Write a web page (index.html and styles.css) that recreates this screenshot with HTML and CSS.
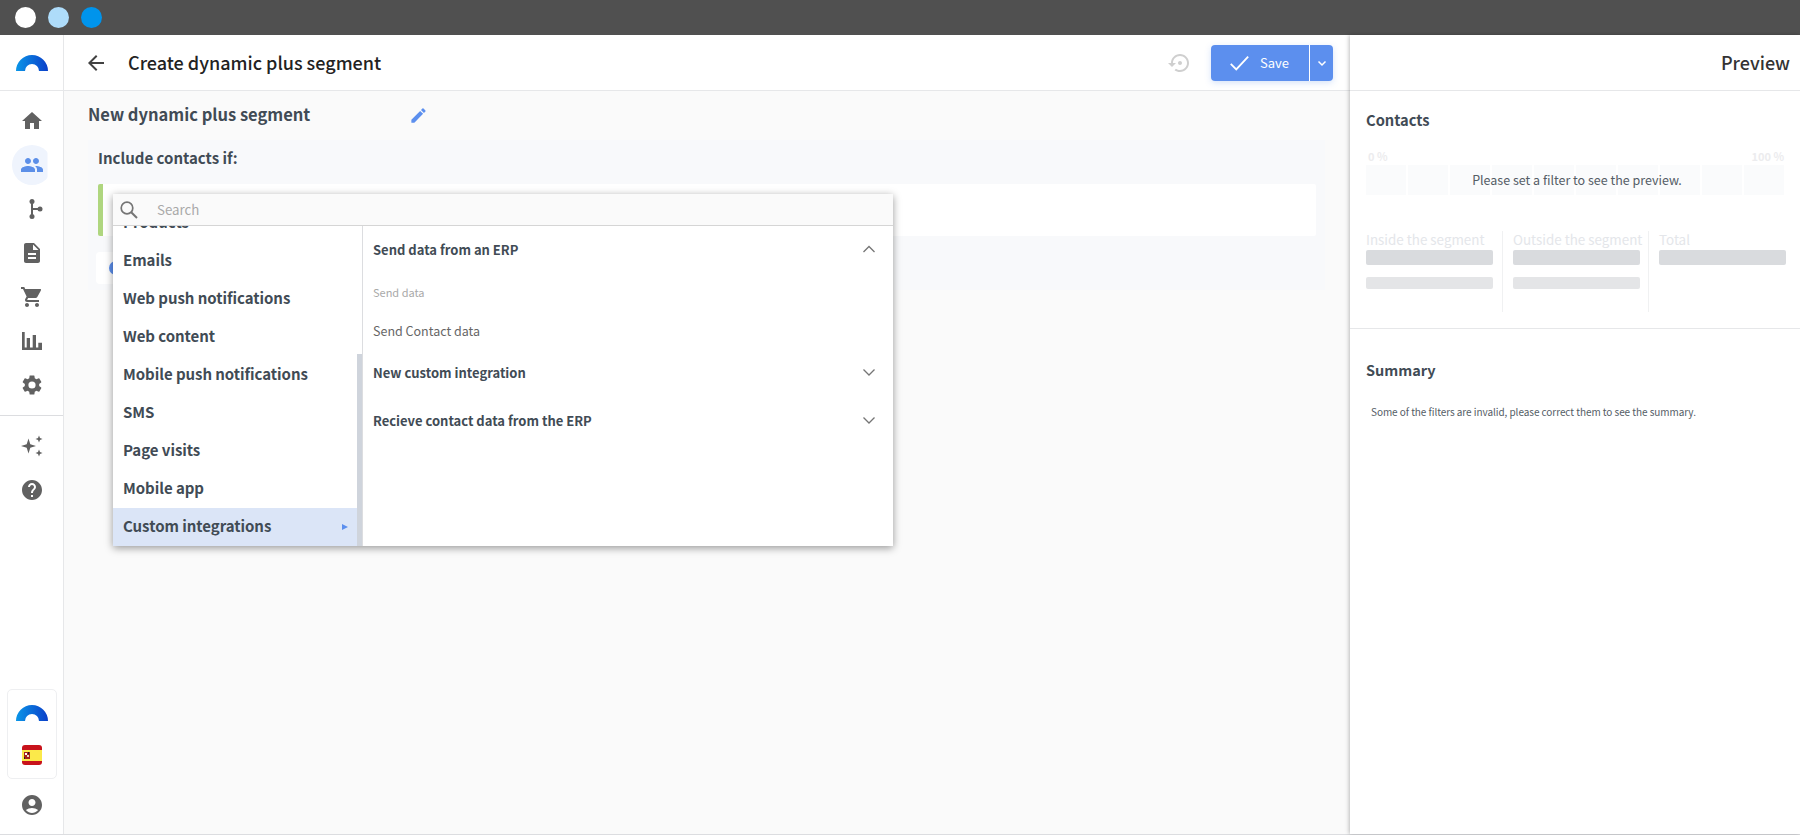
FILE: index.html
```html
<!DOCTYPE html>
<html lang="en">
<head>
<meta charset="utf-8">
<title>Create dynamic plus segment</title>
<link rel="stylesheet" href="styles.css">
</head>
<body>
<div class="titlebar">
  <span class="dot dot-white"></span><span class="dot dot-light"></span><span class="dot dot-blue"></span>
</div>
<div class="app">
  <nav class="sidebar">
    <div class="side-logo">
      <svg class="arch" viewBox="0 0 32 16"><defs><linearGradient id="g1" x1="0" x2="1" y1="0" y2="0"><stop offset="0" stop-color="#0a96e8"/><stop offset="1" stop-color="#0b3fc9"/></linearGradient></defs><path d="M0 16A16 16 0 0 1 32 16H23A7 7 0 0 0 9 16Z" fill="url(#g1)"/></svg>
    </div>
    <div class="side-icons">
      <a class="side-icon"><svg viewBox="0 0 24 24"><path d="M10 20v-6h4v6h5v-8h3L12 3 2 12h3v8z"/></svg></a>
      <a class="side-icon active"><svg viewBox="0 0 24 24"><path d="M16 11c1.660 0 2.990-1.340 2.990-3S17.660 5 16 5s-3 1.340-3 3 1.340 3 3 3zm-8 0c1.660 0 2.990-1.340 2.990-3S9.660 5 8 5 5 6.340 5 8s1.340 3 3 3zm0 2c-2.330 0-7 1.170-7 3.500V19h14v-2.500C15 14.170 10.330 13 8 13zm8 0c-.29 0-.62.02-.97.05 1.160.84 1.970 1.970 1.970 3.450V19h6v-2.500c0-2.330-4.670-3.500-7-3.500z"/></svg></a>
      <a class="side-icon"><svg viewBox="0 0 24 24"><circle cx="12" cy="4.500" r="2.500"/><circle cx="12" cy="19.500" r="2.500"/><circle cx="20" cy="12" r="2.500"/><path d="M11 4.500h2V11h7v2h-7v6.500h-2z"/></svg></a>
      <a class="side-icon"><svg viewBox="0 0 24 24"><path d="M14 2H6c-1.100 0-2 .9-2 2v16c0 1.100.89 2 1.990 2H18c1.100 0 2-.9 2-2V8l-6-6zm2 16H8v-2h8v2zm0-4H8v-2h8v2zm-3-5V3.500L18.500 9H13z"/></svg></a>
      <a class="side-icon"><svg viewBox="0 0 24 24"><path d="M7 18c-1.100 0-1.990.9-1.990 2S5.900 22 7 22s2-.9 2-2-.9-2-2-2zM1 2v2h2l3.600 7.590-1.350 2.450c-.16.28-.25.61-.25.960 0 1.100.9 2 2 2h12v-2H7.420c-.14 0-.25-.11-.25-.25l.03-.12.9-1.630h7.450c.75 0 1.410-.41 1.750-1.030l3.580-6.490A1 1 0 0 0 20 4H5.210l-.94-2H1zm16 16c-1.100 0-1.990.9-1.990 2s.89 2 1.990 2 2-.9 2-2-.9-2-2-2z"/></svg></a>
      <a class="side-icon"><svg viewBox="0 0 24 24"><path d="M2 3h2.700v15.500h2V9H10v9.500h2.700V6H16v12.500h2.300v-4.800H22V21H2z"/></svg></a>
      <a class="side-icon"><svg viewBox="0 0 24 24"><path d="M19.140 12.940c.04-.3.060-.61.060-.94 0-.32-.02-.64-.07-.94l2.030-1.580a.49.49 0 0 0 .12-.61l-1.920-3.320a.488.488 0 0 0-.59-.22l-2.390.96c-.5-.38-1.030-.7-1.620-.94l-.36-2.540a.484.484 0 0 0-.48-.41h-3.840c-.24 0-.43.17-.47.41l-.36 2.540c-.59.24-1.130.57-1.620.94l-2.390-.96c-.22-.08-.47 0-.59.22L2.740 8.870c-.12.21-.08.47.12.61l2.030 1.580c-.05.3-.09.63-.09.94s.02.64.07.94l-2.030 1.580a.49.49 0 0 0-.12.61l1.920 3.320c.12.22.37.29.59.22l2.390-.96c.5.38 1.030.7 1.620.94l.36 2.540c.05.24.24.41.48.41h3.840c.24 0 .44-.17.47-.41l.36-2.540c.59-.24 1.130-.56 1.620-.94l2.390.96c.22.08.47 0 .59-.22l1.920-3.320c.12-.22.07-.47-.12-.61l-2.010-1.580zM12 15.600A3.600 3.600 0 1 1 12 8.400a3.600 3.600 0 0 1 0 7.200z"/></svg></a>
    </div>
    <div class="side-rule"></div>
    <div class="side-icons">
      <a class="side-icon"><svg viewBox="0 0 24 24"><path d="M8.500 4.500L10.300 10.200 16 12 10.300 13.800 8.500 19.500 6.700 13.800 1 12 6.700 10.200zM19 1.500L20 4 22.500 5 20 6 19 8.500 18 6 15.500 5 18 4zM19 15.500L20 18 22.500 19 20 20 19 22.500 18 20 15.500 19 18 18z"/></svg></a>
      <a class="side-icon"><svg viewBox="0 0 24 24"><path d="M12 2C6.480 2 2 6.480 2 12s4.480 10 10 10 10-4.480 10-10S17.520 2 12 2zm1 17h-2v-2h2v2zm2.070-7.750l-.9.920C13.450 12.900 13 13.500 13 15h-2v-.5c0-1.100.45-2.100 1.170-2.830l1.240-1.260c.37-.36.59-.86.59-1.410 0-1.100-.9-2-2-2s-2 .9-2 2H8c0-2.210 1.790-4 4-4s4 1.790 4 4c0 .88-.36 1.680-.93 2.250z"/></svg></a>
    </div>
    <div class="side-spacer"></div>
    <div class="side-card">
      <svg class="arch" viewBox="0 0 32 16"><defs><linearGradient id="g2" x1="0" x2="1" y1="0" y2="0"><stop offset="0" stop-color="#0a96e8"/><stop offset="1" stop-color="#0b3fc9"/></linearGradient></defs><path d="M0 16A16 16 0 0 1 32 16H23A7 7 0 0 0 9 16Z" fill="url(#g2)"/></svg>
      <svg class="flag" viewBox="0 0 20 20"><rect width="20" height="20" rx="3" fill="#c8131b"/><rect y="5" width="20" height="11" fill="#fbe94a"/><rect x="2" y="7" width="6" height="7" fill="#a5201c"/><rect x="3" y="8" width="2" height="2" fill="#fff"/><rect x="5" y="10" width="2" height="2" fill="#e8d9c0"/><rect x="2" y="12" width="1" height="2" fill="#222"/><rect x="6" y="7" width="1" height="2" fill="#222"/></svg>
    </div>
    <a class="side-icon side-user"><svg viewBox="0 0 24 24"><path d="M12 2C6.480 2 2 6.480 2 12s4.480 10 10 10 10-4.480 10-10S17.520 2 12 2zm0 4c1.930 0 3.500 1.570 3.500 3.500S13.930 13 12 13s-3.500-1.570-3.500-3.500S10.070 6 12 6zm0 14c-2.030 0-4.430-.82-6.140-2.880a9.950 9.950 0 0 1 12.280 0C16.430 19.180 14.030 20 12 20z"/></svg></a>
  </nav>

  <main class="main">
    <header class="topbar">
      <svg class="back" viewBox="0 0 24 24"><path d="M20 11H7.830l5.590-5.590L12 4l-8 8 8 8 1.410-1.410L7.830 13H20z"/></svg>
      <h1 class="page-title">Create dynamic plus segment</h1>
      <svg class="restore" viewBox="0 0 24 24"><path d="M14 12c0-1.100-.9-2-2-2s-2 .9-2 2 .9 2 2 2 2-.9 2-2zm-2-9c-4.970 0-9 4.030-9 9H0l4 4 4-4H5c0-3.870 3.130-7 7-7s7 3.130 7 7-3.130 7-7 7c-1.510 0-2.910-.49-4.060-1.300l-1.420 1.440C8.040 20.300 9.940 21 12 21c4.970 0 9-4.030 9-9s-4.030-9-9-9z"/></svg>
      <div class="save">
        <button class="save-main"><svg viewBox="0 0 24 24"><path d="M3 13l6 6L22 5" fill="none" stroke="#fff" stroke-width="2"/></svg><span>Save</span></button>
        <button class="save-more"><svg viewBox="0 0 12 12"><path d="M2.500 4.500L6 8l3.500-3.500" fill="none" stroke="#fff" stroke-width="1.500"/></svg></button>
      </div>
    </header>
    <div class="content">
      <div class="name-row">
        <h2 class="seg-name">New dynamic plus segment</h2>
        <svg class="pencil" viewBox="0 0 24 24"><path d="M3 17.250V21h3.750L17.810 9.940l-3.750-3.750L3 17.250zM20.710 7.040a1 1 0 0 0 0-1.410l-2.340-2.340a1 1 0 0 0-1.410 0l-1.830 1.830 3.750 3.750 1.830-1.830z"/></svg>
      </div>
      <section class="include">
        <div class="include-title">Include contacts if:</div>
        <div class="rule-row"></div>
        <div class="add-row"><span class="add-dot"></span></div>
      </section>
    </div>

    <div class="picker">
      <div class="picker-search">
        <svg viewBox="0 0 18 18"><circle cx="7" cy="7" r="5.800" fill="none" stroke="#757575" stroke-width="1.700"/><path d="M11.200 11.200L17 17" stroke="#757575" stroke-width="2"/></svg>
        <span>Search</span>
      </div>
      <div class="picker-body">
        <div class="cats">
          <div class="cat-list">
            <div class="cat">Products</div>
            <div class="cat">Emails</div>
            <div class="cat">Web push notifications</div>
            <div class="cat">Web content</div>
            <div class="cat">Mobile push notifications</div>
            <div class="cat">SMS</div>
            <div class="cat">Page visits</div>
            <div class="cat">Mobile app</div>
            <div class="cat selected">Custom integrations<i class="cat-arrow"></i></div>
          </div>
          <div class="scroll-track"><div class="scroll-thumb"></div></div>
        </div>
        <div class="detail">
          <div class="group-head first">Send data from an ERP<svg viewBox="0 0 16 16"><path d="M2.500 11L8 5.500l5.500 5.500" fill="none" stroke="#757575" stroke-width="1.300"/></svg></div>
          <div class="group-label">Send data</div>
          <div class="group-item">Send Contact data</div>
          <div class="group-head">New custom integration<svg viewBox="0 0 16 16"><path d="M2.500 5.500L8 11l5.500-5.500" fill="none" stroke="#757575" stroke-width="1.300"/></svg></div>
          <div class="group-head">Recieve contact data from the ERP<svg viewBox="0 0 16 16"><path d="M2.500 5.500L8 11l5.500-5.500" fill="none" stroke="#757575" stroke-width="1.300"/></svg></div>
        </div>
      </div>
    </div>
  </main>

  <aside class="preview">
    <div class="preview-head">Preview</div>
    <section class="contacts">
      <h3 class="panel-title">Contacts</h3>
      <div class="scale"><span>0 %</span><span>100 %</span></div>
      <div class="cells">
        <i></i><i></i><i></i><i></i><i></i><i></i><i></i><i></i><i></i><i></i>
        <div class="cells-msg">Please set a filter to see the preview.</div>
      </div>
      <div class="stats">
        <div class="stat"><div class="stat-label">Inside the segment</div><div class="bar bar-a"></div><div class="bar bar-b"></div></div>
        <div class="stat"><div class="stat-label">Outside the segment</div><div class="bar bar-a"></div><div class="bar bar-b"></div></div>
        <div class="stat"><div class="stat-label">Total</div><div class="bar bar-a"></div></div>
      </div>
    </section>
    <section class="summary">
      <h3 class="panel-title summary-title">Summary</h3>
      <p class="summary-text">Some of the filters are invalid, please correct them to see the summary.</p>
    </section>
  </aside>
</div>
</body>
</html>
```
FILE: styles.css
```css
* { box-sizing: border-box; }
html, body { margin: 0; height: 100%; overflow: hidden; }
body { display: flex; flex-direction: column; font-family: "Noto Sans CJK JP", "Noto Sans", sans-serif; color: #414b55; background: #fff; }
h1, h2, h3, p { margin: 0; }
svg { display: block; }

.titlebar { height: 35px; flex: none; background: #505050; display: flex; align-items: center; gap: 12px; padding-left: 15px; }
.dot { width: 21px; height: 21px; border-radius: 50%; }
.dot-white { background: #fff; }
.dot-light { background: #aedcfa; }
.dot-blue { background: #0094ec; }

.app { flex: 1; display: flex; min-height: 0; border-bottom: 1px solid #dcdde0; }

.sidebar { width: 64px; flex: none; border-right: 1px solid #e6e7e9; display: flex; flex-direction: column; align-items: center; background: #fff; }
.side-logo { height: 56px; flex: none; width: 100%; border-bottom: 1px solid #e6e7e9; display: flex; align-items: center; justify-content: center; margin-bottom: 10px; }
.arch { width: 32px; height: 16px; }
.side-icons { display: flex; flex-direction: column; align-items: center; gap: 4px; width: 100%; }
.side-icon { width: 40px; height: 40px; flex: none; display: flex; align-items: center; justify-content: center; border-radius: 50%; }
.side-icon svg { width: 24px; height: 24px; fill: #616161; }
.side-icon.active { background: #eff4fd; clip-path: inset(0 4px 0 0); }
.side-icon.active svg { fill: #5c8fe8; }
.side-rule { width: 100%; height: 1px; flex: none; background: #dcdde0; margin: 10px 0; }
.side-spacer { flex: 1; }
.side-card { width: 50px; height: 90px; flex: none; border: 1px solid #eeeff1; border-radius: 5px; display: flex; flex-direction: column; align-items: center; justify-content: space-between; padding: 15px 0 13px; margin-bottom: 6px; }
.flag { width: 20px; height: 20px; }
.side-user { margin-bottom: 9px; }

.main { position: relative; flex: 1; min-width: 0; display: flex; flex-direction: column; background: #fafafa; }
.topbar { height: 56px; flex: none; background: #fff; border-bottom: 1px solid #e6e7e9; display: flex; align-items: center; padding: 0 17px 0 20px; }
.back { width: 24px; height: 24px; fill: #414141; }
.page-title { font-size: 18px; font-weight: 500; color: #222; margin-left: 20px; flex: 1; padding-bottom: 2px; }
.restore { width: 24px; height: 24px; fill: #cfcfcf; margin-right: 19px; }
.save { display: flex; width: 122px; height: 36px; border-radius: 4px; overflow: hidden; box-shadow: 0 2px 6px rgba(92,143,232,.25); }
.save button { border: 0; background: #5c8fee; color: #fff; padding: 0; font: inherit; display: flex; align-items: center; }
.save .save-main { flex: 1; gap: 10px; font-size: 13px; padding-left: 17px; }
.save-main svg { width: 22px; height: 22px; }
.save .save-more { width: 24px; justify-content: center; border-left: 1px solid #fff; }
.save-more svg { width: 12px; height: 12px; }

.content { flex: 1; padding: 0 25px 0 24px; }
.name-row { display: flex; align-items: center; height: 48px; }
.seg-name { font-size: 16.5px; font-weight: 700; width: 321px; color: #414b55; padding-bottom: 2px; }
.pencil { width: 19px; height: 19px; fill: #5c8fee; }
.include { height: 150px; margin-top: 1px; background: #f8f9fb; padding: 0 9px 0 10px; }
.include-title { font-size: 15px; line-height: 20px; font-weight: 700; height: 44px; padding-top: 8px; }
.rule-row { height: 52px; background: #fff; border-left: 5px solid #afd67f; border-radius: 2px; }
.add-row { width: 150px; height: 32px; background: #fff; border-radius: 4px; margin: 16px 0 0 -2px; display: flex; align-items: center; padding-left: 13px; }
.add-dot { width: 14px; height: 14px; border-radius: 50%; background: #5c8fee; }

.picker { position: absolute; left: 49px; top: 159px; width: 780px; height: 352px; background: #fff; box-shadow: 0 2px 8px rgba(0,0,0,.4); display: flex; flex-direction: column; z-index: 5; }
.picker-search { height: 32px; flex: none; background: #fafafa; border-bottom: 1px solid #d5d5d5; display: flex; align-items: center; padding-left: 7px; font-size: 13.300px; color: #a9a9a9; }
.picker-search svg { width: 18px; height: 18px; }
.picker-search span { margin-left: 19px; }
.picker-body { flex: 1; min-height: 0; display: flex; }
.cats { width: 250px; flex: none; border-right: 1px solid #dcdde0; display: flex; overflow: hidden; }
.cat-list { flex: 1; margin-top: -22px; }
.cat { height: 38px; display: flex; align-items: center; padding: 0 0 3px 10px; font-size: 15px; letter-spacing: -.05px; font-weight: 700; color: #414b55; }
.cat.selected { background: #dbe5f7; justify-content: space-between; padding-right: 9px; }
.cat-arrow { width: 0; height: 0; margin-top: 3px; border-left: 6px solid #5c8fee; border-top: 3px solid transparent; border-bottom: 3px solid transparent; }
.scroll-track { width: 5px; background: #fff; display: flex; flex-direction: column; padding-top: 128px; }
.scroll-thumb { flex: 1; background: #cfd4dc; }
.detail { flex: 1; padding: 0 16px 0 10px; }
.group-head { height: 48px; display: flex; align-items: center; justify-content: space-between; padding-bottom: 2px; font-size: 13px; font-weight: 700; color: #414b55; }
.group-head.first { height: 46px; padding-bottom: 0; }
.group-head svg { width: 16px; height: 16px; }
.group-label { font-size: 11px; line-height: 18px; color: #a9a9a9; margin-top: 11px; height: 20px; }
.group-item { font-size: 12.500px; line-height: 30px; color: #666; margin-top: 13px; height: 30px; margin-bottom: 3px; }

.preview { width: 450px; flex: none; background: #fff; box-shadow: -1px 0 4px rgba(0,0,0,.25); z-index: 2; }
.preview-head { height: 56px; border-bottom: 1px solid #e6e7e9; display: flex; align-items: center; justify-content: flex-end; padding: 0 10px 2px 0; font-size: 18px; font-weight: 500; color: #333; }
.contacts { height: 238px; border-bottom: 1px solid #e6e7e9; padding: 20px 16px 0 16px; }
.panel-title { font-size: 14.700px; line-height: 18px; height: 20px; font-weight: 700; color: #414b55; }
.summary-title { font-size: 14.500px; }
.scale { display: flex; justify-content: space-between; font-size: 11px; line-height: 12px; height: 14px; font-weight: 700; color: #ececee; margin-top: 19px; padding: 0 0 0 2px; }
.cells { position: relative; display: flex; gap: 2px; height: 30px; margin-top: 1px; }
.cells i { flex: 1; background: #fafbfc; }
.cells-msg { position: absolute; inset: 0; display: flex; align-items: center; justify-content: center; padding: 0 0 2px 4px; font-size: 12.500px; color: #555d66; }
.stats { display: grid; grid-template-columns: 137px 146px 137px; margin-top: 36px; height: 81px; }
.stat { padding: 0 8px 0 10px; border-right: 1px solid #f0f1f2; }
.stat:first-child { padding: 0 9px 0 0; }
.stat:last-child { border-right: 0; padding-right: 0; }
.stat-label { font-size: 13.400px; line-height: 17px; color: #e4e6ea; white-space: nowrap; margin-bottom: 2px; }
.bar { height: 15px; border-radius: 2px; background: #d9dbde; }
.bar-b { height: 12px; margin-top: 12px; background: #e4e5e7; }
.summary { padding: 32px 16px; }
.summary-text { font-size: 10px; line-height: 13px; letter-spacing: -.06px; color: #555d66; margin-top: 24px; padding-left: 5px; }
```
